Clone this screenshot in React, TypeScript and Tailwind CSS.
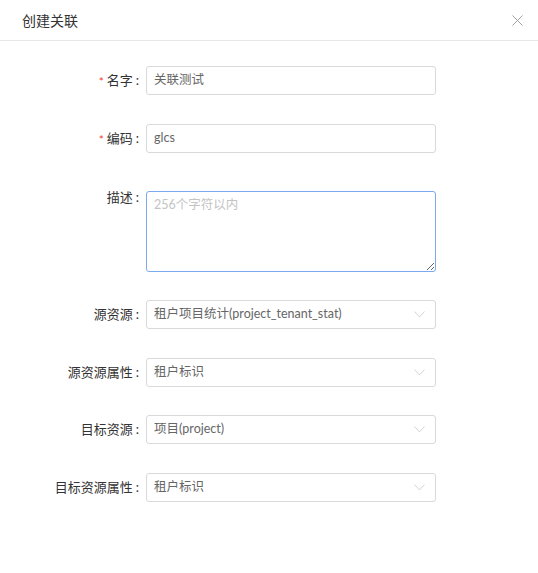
import React from 'react';

const font = { fontFamily: 'Lato, "Noto Sans CJK SC", sans-serif' };

const Label: React.FC<{ text: string; required?: boolean }> = ({ text, required }) => (
  <div className="w-[146px] shrink-0 flex items-center justify-end text-[13px] text-[#333]">
    {required && <span className="text-[#f04134] mr-[3px] text-[12px] leading-none mt-[2px]">*</span>}
    <span>{text}</span>
    <span className="ml-[3px] mr-[7px]">:</span>
  </div>
);

const Chevron = () => (
  <svg width="11" height="7" viewBox="0 0 11 7" fill="none" stroke="#cfcfcf" strokeWidth="0.9">
    <path d="M0.5 0.5 L5.5 6 L10.5 0.5" />
  </svg>
);

const TextRow: React.FC<{ label: string; value: string; required?: boolean; className?: string }> = ({ label, value, required, className }) => (
  <div className={`flex items-center h-[29px] ${className ?? ''}`}>
    <Label text={label} required={required} />
    <div className="w-[290px] h-[29px] border border-[#d9d9d9] rounded-[3px] flex items-center px-[7px] text-[12.5px] text-[#666]">
      {value}
    </div>
  </div>
);

const SelectRow: React.FC<{ label: string; value: string; className?: string }> = ({ label, value, className }) => (
  <div className={`flex items-center h-[29px] ${className ?? ''}`}>
    <Label text={label} />
    <div className="w-[290px] h-[29px] border border-[#d9d9d9] rounded-[3px] flex items-center justify-between pl-[7px] pr-[10px] text-[12.5px] text-[#666]">
      <span>{value}</span>
      <Chevron />
    </div>
  </div>
);

export default function App() {
  return (
    <div className="w-[538px] h-[573px] bg-white" style={font}>
      <div className="h-[41px] border-b border-[#e8e8e8] flex items-center justify-between pl-[22px] pr-[15px]">
        <span className="text-[14px] text-[#333]">创建关联</span>
        <svg width="11" height="11" viewBox="0 0 11 11" stroke="#a0a0a0" strokeWidth="1">
          <path d="M0.5 0.5 L10.5 10.5 M10.5 0.5 L0.5 10.5" />
        </svg>
      </div>

      <div className="flex flex-col">
        <TextRow label="名字" value="关联测试" required className="mt-[25px]" />
        <TextRow label="编码" value="glcs" required className="mt-[29px]" />

        <div className="flex mt-[38px]">
          <div className="w-[146px] shrink-0 flex justify-end text-[13px] text-[#333] -mt-[3px]">
            <span>描述</span>
            <span className="ml-[3px] mr-[7px]">:</span>
          </div>
          <textarea
            className="w-[290px] h-[81px] border border-[#7aa9ee] rounded-[3px] px-[7px] pt-[4px] pb-[3px] text-[12.5px] text-[#666] placeholder:text-[#c4c4c4] outline-none"
            placeholder="256个字符以内"
            style={font}
          />
        </div>

        <SelectRow label="源资源" value="租户项目统计(project_tenant_stat)" className="mt-[28px]" />
        <SelectRow label="源资源属性" value="租户标识" className="mt-[29px]" />
        <SelectRow label="目标资源" value="项目(project)" className="mt-[28px]" />
        <SelectRow label="目标资源属性" value="租户标识" className="mt-[29px]" />
      </div>
    </div>
  );
}
